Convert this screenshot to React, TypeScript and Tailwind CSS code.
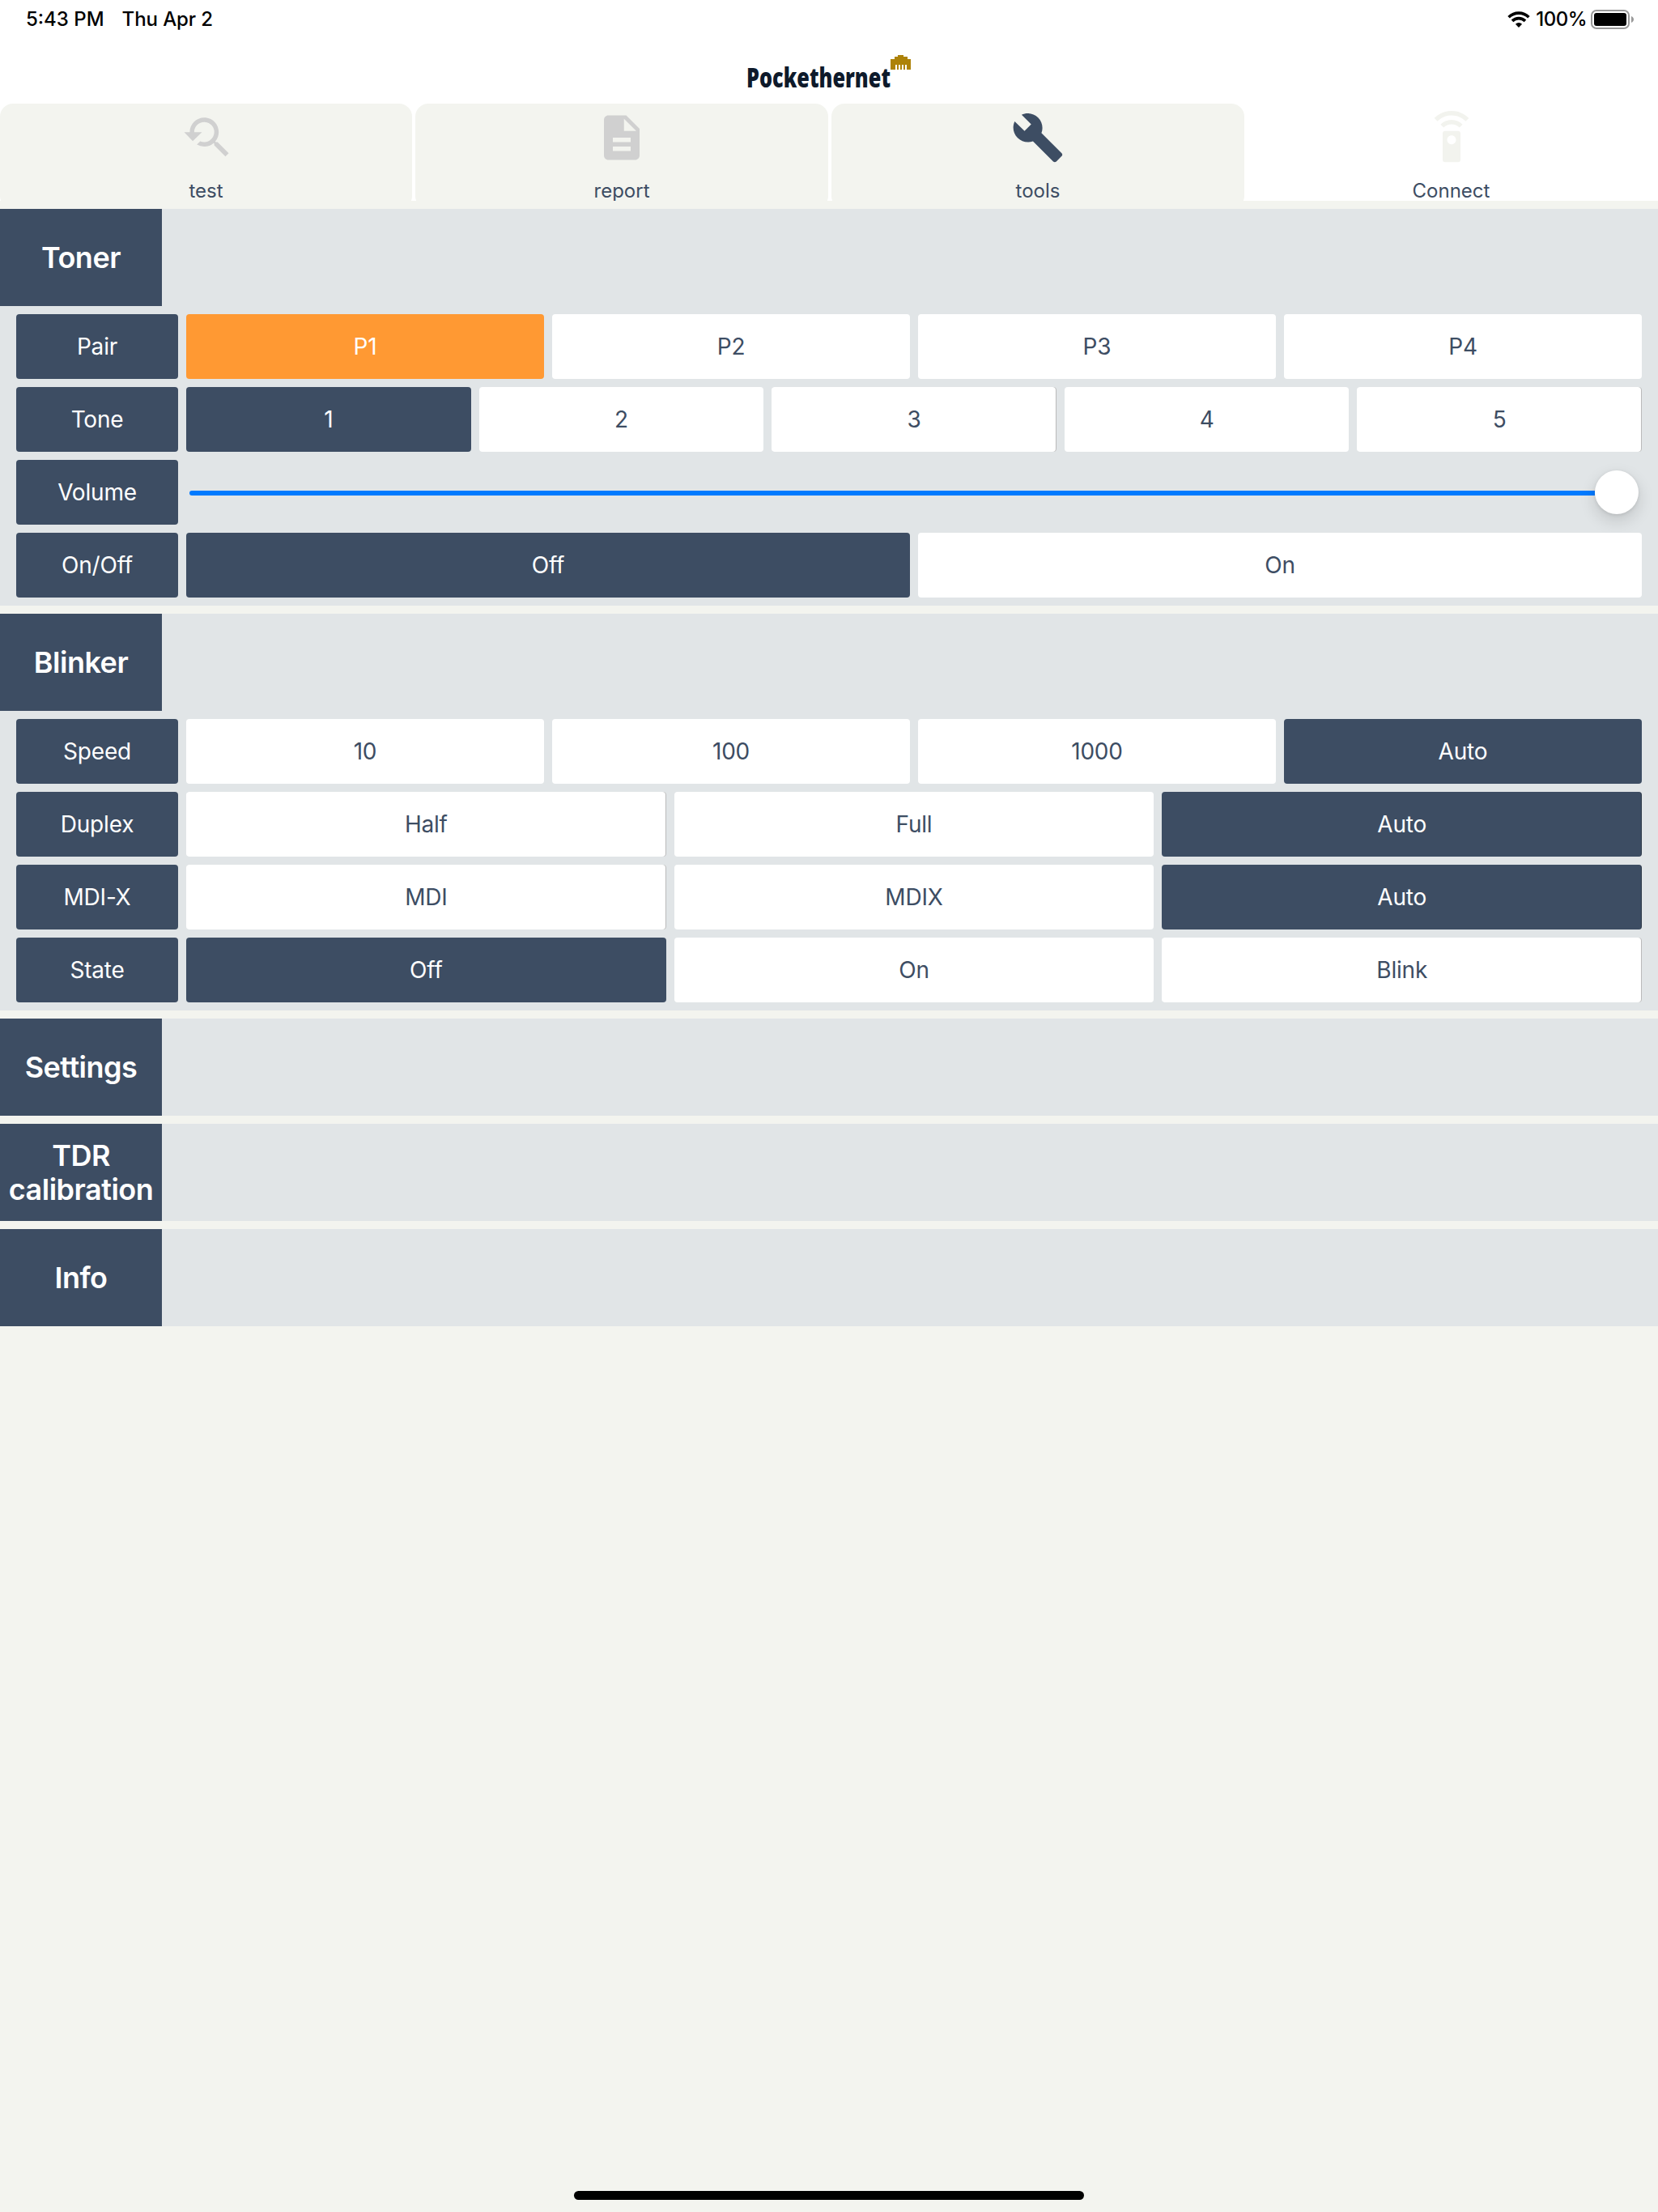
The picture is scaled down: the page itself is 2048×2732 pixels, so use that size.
import { useState } from "react"
import { MdBuild, MdDescription, MdSettingsRemote, MdYoutubeSearchedFor } from "react-icons/md"

interface OptionRowProps {
  label: string
  options: string[]
  value: string
  accent?: boolean
  edged?: string[]
  onChange: (value: string) => void
}

const tabs = [
  { name: "test", Icon: MdYoutubeSearchedFor, color: "text-[#d0d0d0]" },
  { name: "report", Icon: MdDescription, color: "text-[#d0d0d0]" },
  { name: "tools", Icon: MdBuild, color: "text-[#3d4d63]" },
  { name: "Connect", Icon: MdSettingsRemote, color: "text-[#f2f3ee]" },
]

function StatusBar() {
  return (
    <div className="flex h-10 items-center justify-between pl-8 pr-[30px] pt-[7px] text-2xl font-medium leading-8 text-black">
      <div className="flex gap-[22px]">
        <span>5:43 PM</span>
        <span className="tracking-[-0.1px]">Thu Apr 2</span>
      </div>
      <div className="flex items-center">
        <svg className="mr-[7px] h-5 w-7" viewBox="0 0 28 20">
          <g fill="none" stroke="#000" strokeWidth="3.6">
            <path d="M1.600 7.200a17.600 17.600 0 0 1 24.800 0" />
            <path d="M6 11.900a11.400 11.400 0 0 1 16 0" />
          </g>
          <path d="M14 20l-4.100-4.300a6 6 0 0 1 8.200 0z" />
        </svg>
        <span className="tracking-[-0.5px]">100%</span>
        <svg className="ml-[5px] h-6 w-[53px]" viewBox="0 0 53 24">
          <rect x="1" y="1" width="46" height="22" rx="6" fill="none" stroke="#999" strokeWidth="2" />
          <rect x="4" y="4" width="40" height="16" rx="3" />
          <path d="M50 8c4 1.500 4 6.500 0 8z" fill="#999" />
        </svg>
      </div>
    </div>
  )
}

function Logo() {
  return (
    <svg className="h-16 w-[216px] overflow-visible" viewBox="-4 0 216 64">
      <text
        x="2"
        y="44"
        textLength="178"
        lengthAdjust="spacingAndGlyphs"
        fill="#0e1a2b"
        className="font-['Open_Sans',sans-serif] text-[34px] font-extrabold"
      >
        Pockethernet
      </text>
      <path fill="#ad8208" d="M180 9h5V6h4V4h7v2h5v3h4v13h-5v-6h-2v6h-2v-6h-2v6h-2v-6h-2v6h-2v-6h-2v6h-6z" />
    </svg>
  )
}

function OptionRow({ label, options, value, accent, edged = [], onChange }: OptionRowProps) {
  const selected = accent ? "bg-[#ff9933] text-white" : "bg-[#3d4d63] text-white"

  return (
    <div className="flex h-20 gap-2.5">
      <RowLabel text={label} />
      <div className="flex flex-1 gap-2.5">
        {options.map((option) => (
          <button
            key={option}
            onClick={() => onChange(option)}
            className={`flex-1 basis-0 rounded ${option === value ? selected : "bg-white text-[#3d4d63]"} ${
              edged.includes(option) ? "shadow-[inset_-1px_0_0_rgba(0,0,0,0.27)]" : ""
            }`}
          >
            {option}
          </button>
        ))}
      </div>
    </div>
  )
}

function RowLabel({ text }: { text: string }) {
  return (
    <div className="flex h-20 w-[200px] shrink-0 items-center justify-center rounded bg-[#3d4d63] text-white">
      {text}
    </div>
  )
}

function VolumeRow() {
  return (
    <div className="flex h-20 items-center gap-2.5">
      <RowLabel text="Volume" />
      <div className="flex flex-1 items-center px-1">
        <div className="mt-0.5 h-1.5 flex-1 rounded-l-full bg-[#007aff]" />
        <div className="size-[54px] rounded-full bg-white shadow-[0_8px_20px_rgba(0,0,0,0.14),0_1px_4px_rgba(0,0,0,0.1)]" />
      </div>
    </div>
  )
}

function Section({ title, children }: { title: string; children?: React.ReactNode }) {
  return (
    <section className="bg-[#e1e5e7]">
      <h2 className="flex h-[120px] w-[200px] items-center justify-center bg-[#3d4d63] text-center text-4xl font-semibold leading-[42px] tracking-[-0.5px] text-white">
        {title}
      </h2>
      {children && (
        <div className="flex flex-col gap-2.5 px-5 py-2.5 text-[28px] tracking-[-0.2px]">{children}</div>
      )}
    </section>
  )
}

export default function App() {
  const [pair, setPair] = useState("P1")
  const [tone, setTone] = useState("1")
  const [toner, setToner] = useState("Off")
  const [speed, setSpeed] = useState("Auto")
  const [duplex, setDuplex] = useState("Auto")
  const [mdix, setMdix] = useState("Auto")
  const [state, setState] = useState("Off")

  return (
    <div className="flex h-[2732px] w-[2048px] flex-col bg-[#f3f4ef] font-['Inter',sans-serif]">
      <header className="bg-white">
        <StatusBar />
        <div className="flex h-[88px] justify-center pt-6">
          <Logo />
        </div>
        {/* Tabs run past the bottom of the bar so the lower corners are clipped */}
        <nav className="grid h-[120px] grid-cols-[509px_510px_510px_507px] gap-1 overflow-hidden">
          {tabs.map(({ name, Icon, color }) => (
            <button
              key={name}
              className={`flex h-[130px] flex-col items-center rounded-2xl pt-[9px] ${
                name === "Connect" ? "-ml-1 bg-white" : "bg-[#f3f4ef]"
              }`}
            >
              <Icon className={`size-[66px] ${color}`} />
              <span className="mt-[21px] text-2xl leading-6 text-[#3d4d63]">{name}</span>
            </button>
          ))}
        </nav>
      </header>

      <main className="flex flex-1 flex-col gap-2.5 pt-2.5">
        <Section title="Toner">
          <OptionRow label="Pair" options={["P1", "P2", "P3", "P4"]} value={pair} accent onChange={setPair} />
          <OptionRow
            label="Tone"
            options={["1", "2", "3", "4", "5"]}
            value={tone}
            edged={["3", "5"]}
            onChange={setTone}
          />
          <VolumeRow />
          <OptionRow label="On/Off" options={["Off", "On"]} value={toner} onChange={setToner} />
        </Section>
        <Section title="Blinker">
          <OptionRow label="Speed" options={["10", "100", "1000", "Auto"]} value={speed} onChange={setSpeed} />
          <OptionRow
            label="Duplex"
            options={["Half", "Full", "Auto"]}
            value={duplex}
            edged={["Half", "Auto"]}
            onChange={setDuplex}
          />
          <OptionRow
            label="MDI-X"
            options={["MDI", "MDIX", "Auto"]}
            value={mdix}
            edged={["MDI", "Auto"]}
            onChange={setMdix}
          />
          <OptionRow
            label="State"
            options={["Off", "On", "Blink"]}
            value={state}
            edged={["Blink"]}
            onChange={setState}
          />
        </Section>
        <Section title="Settings" />
        <Section title="TDR calibration" />
        <Section title="Info" />
      </main>

      {/* Home indicator */}
      <div className="mx-auto mb-[15px] h-[11px] w-[630px] rounded-full bg-black" />
    </div>
  )
}
